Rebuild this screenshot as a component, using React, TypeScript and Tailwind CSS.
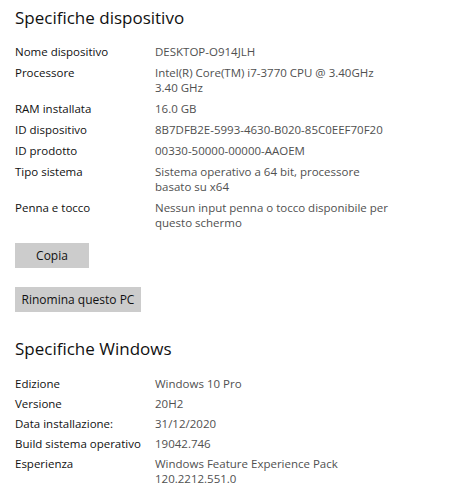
import { Fragment } from 'react';

const device: [string, string[]][] = [
  ['Nome dispositivo', ['DESKTOP-O914JLH']],
  ['Processore', ['Intel(R) Core(TM) i7-3770 CPU @ 3.40GHz', '3.40 GHz']],
  ['RAM installata', ['16.0 GB']],
  ['ID dispositivo', ['8B7DFB2E-5993-4630-B020-85C0EEF70F20']],
  ['ID prodotto', ['00330-50000-00000-AAOEM']],
  ['Tipo sistema', ['Sistema operativo a 64 bit, processore', 'basato su x64']],
  ['Penna e tocco', ['Nessun input penna o tocco disponibile per', 'questo schermo']],
];

const windows: [string, string[]][] = [
  ['Edizione', ['Windows 10 Pro']],
  ['Versione', ['20H2']],
  ['Data installazione:', ['31/12/2020']],
  ['Build sistema operativo', ['19042.746']],
  ['Esperienza', ['Windows Feature Experience Pack', '120.2212.551.0']],
];

function SpecList({ rows, tight }: { rows: [string, string[]][]; tight?: boolean }) {
  return (
    <div className={tight ? 'flex flex-col gap-[5px] leading-[15px]' : 'flex flex-col gap-[6px] leading-[15px]'}>
      {rows.map(([label, lines]) => (
        <div key={label} className="flex">
          <div className="w-[140px] shrink-0 text-[11.5px] text-[#111]">{label}</div>
          <p className="text-[11.5px] text-[#505050]">
            {lines.map((l, i) => (
              <Fragment key={l}>{i > 0 && <br />}{l}</Fragment>
            ))}
          </p>
        </div>
      ))}
    </div>
  );
}

export default function App() {
  return (
    <div className="w-[470px] h-[500px] bg-white pl-[15px] pt-[6px] overflow-hidden"
      style={{ fontFamily: '"Open Sans", "Noto Sans", sans-serif' }}>
      <h1 className="text-[17px] leading-[24px] text-[#111] mb-[14px]">Specifiche dispositivo</h1>
      <SpecList rows={device} />
      <div className="flex flex-col items-start gap-[19px] mt-[13px]">
        <button className="w-[74px] h-[25px] bg-[#cccccc] text-[12px] text-[#111]">Copia</button>
        <button className="w-[126px] h-[25px] bg-[#cccccc] text-[12px] text-[#111]">Rinomina questo PC</button>
      </div>
      <h2 className="text-[17px] leading-[24px] text-[#111] mt-[25px] mb-[15px]">Specifiche Windows</h2>
      <SpecList rows={windows} tight />
    </div>
  );
}
